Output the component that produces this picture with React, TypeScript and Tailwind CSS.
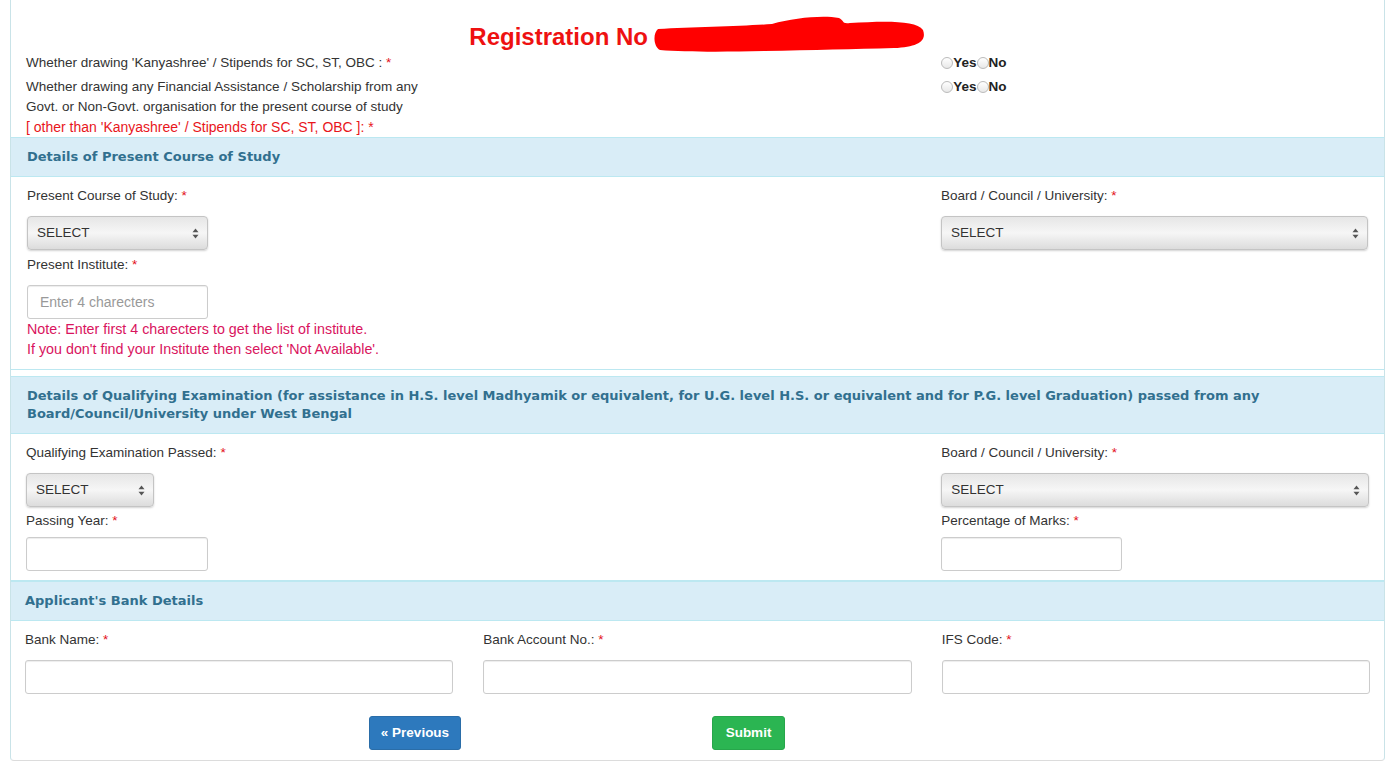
import React from 'react'

const Req = () => <span className="text-[#e3101a]">*</span>

function Label({ text }: { text: string }) {
  return (
    <div className="text-[13.5px] leading-[20px] text-[#333] whitespace-nowrap">
      {text} <Req />
    </div>
  )
}

function SelectBox({ width }: { width: string }) {
  return (
    <div
      className={`${width} h-[34px] flex items-center justify-between pl-[9px] pr-[8px] rounded-[4px] border border-[#c4c4c4] bg-gradient-to-b from-[#e6e6e6] via-[#f6f6f6] to-[#dcdcdc] shadow-[0_1px_2px_rgba(0,0,0,0.18)] text-[13.5px] text-[#333]`}
    >
      <span>SELECT</span>
      <svg width="7" height="11" viewBox="0 0 7 11">
        <path d="M3.5 0.5 L6.5 4.3 L0.5 4.3 Z" fill="#555" />
        <path d="M3.5 10.5 L6.5 6.7 L0.5 6.7 Z" fill="#555" />
      </svg>
    </div>
  )
}

function TextBox({ width, placeholder }: { width: string; placeholder?: string }) {
  return (
    <div
      className={`${width} h-[34px] flex items-center px-[12px] rounded-[3px] border border-[#ccc] bg-white shadow-[inset_0_1px_1px_rgba(0,0,0,0.075)] text-[14px] text-[#999]`}
    >
      {placeholder}
    </div>
  )
}

function Radio() {
  return (
    <span className="inline-block w-[12px] h-[12px] rounded-full border border-[#bbb] bg-gradient-to-b from-white to-[#e8e8e8]" />
  )
}

function YesNo() {
  return (
    <div className="flex items-center h-[20px] text-[13.5px] font-bold text-[#222]">
      <Radio />
      <span>Yes</span>
      <Radio />
      <span>No</span>
    </div>
  )
}

const headCls =
  "bg-[#d9edf7] border-b border-[#bce8f1] py-[10px] text-[13px] leading-[18px] font-bold text-[#31708f] font-['DejaVu_Sans',Verdana,sans-serif]"

export default function App() {
  return (
    <div className="min-h-screen bg-white font-['Liberation_Sans',Arial,sans-serif] text-[#333]">
      <div className="ml-[10px] w-[1375px] border-x border-b border-x-[#c9e3e8] border-b-[#dcdcdc] rounded-b-[4px]">
        {/* Registration + yes/no questions */}
        <div className="pt-[23px]">
          <div className="flex justify-center h-[28px]">
            <span className="text-[24px] leading-[28px] font-bold text-[#ee1111] whitespace-pre">Registration No :</span>
            <svg className="-ml-[9px] -mt-[7px]" width="272" height="36" viewBox="0 0 272 36">
              <path
                d="M4,13 C40,11 90,10 118,8 C140,2 168,-1 185,2 C191,5 187,8 196,7 C230,5 262,4 269,14 C273,25 264,31 240,32 C200,33 160,34 110,35 C70,36 30,36 6,34 C-1,30 -1,17 4,13 Z"
                fill="#ff0000"
              />
            </svg>
          </div>

          <div className="mt-[2px] px-[15px] grid grid-cols-3 gap-x-[30px]">
            <div className="col-span-2">
              <Label text="Whether drawing 'Kanyashree' / Stipends for SC, ST, OBC :" />
            </div>
            <YesNo />
          </div>

          <div className="mt-[4px] px-[15px] grid grid-cols-3 gap-x-[30px]">
            <div className="col-span-2 text-[13.5px] leading-[20px] text-[#333]">
              <div>Whether drawing any Financial Assistance / Scholarship from any</div>
              <div>Govt. or Non-Govt. organisation for the present course of study</div>
              <div className="h-[20px] text-[14px] leading-[20px] text-[#e8161b]">
                [ other than 'Kanyashree' / Stipends for SC, ST, OBC ]: *
              </div>
            </div>
            <YesNo />
          </div>
        </div>

        {/* Present course */}
        <section className="border-y border-[#bce8f1]">
          <div className={`${headCls} px-[16px]`}>Details of Present Course of Study</div>
          <div className="px-[16px] pt-[9px] pb-[10px] grid grid-cols-3 gap-x-[30px] items-start">
            <div>
              <Label text="Present Course of Study:" />
              <div className="mt-[10px]">
                <SelectBox width="w-[181px]" />
              </div>
              <div className="mt-[5px]">
                <Label text="Present Institute:" />
              </div>
              <div className="mt-[10px]">
                <TextBox width="w-[181px]" placeholder="Enter 4 charecters" />
              </div>
              <div className="text-[14.3px] leading-[20px] text-[#d9145e] whitespace-nowrap">
                <div className="h-[20px]">Note: Enter first 4 charecters to get the list of institute.</div>
                <div className="h-[20px]">If you don't find your Institute then select 'Not Available'.</div>
              </div>
            </div>
            <div />
            <div>
              <Label text="Board / Council / University:" />
              <div className="mt-[10px]">
                <SelectBox width="w-full" />
              </div>
            </div>
          </div>
        </section>

        {/* Qualifying examination */}
        <section className="mt-[6px] border-y border-[#bce8f1]">
          <div className={`${headCls} px-[16px]`}>
            Details of Qualifying Examination (for assistance in H.S. level Madhyamik or equivalent, for U.G. level H.S. or equivalent and for P.G. level Graduation) passed from any
            <br />
            Board/Council/University under West Bengal
          </div>
          <div className="px-[15px] pt-[9px] pb-[9px] grid grid-cols-3 gap-x-[30px] items-start">
            <div>
              <Label text="Qualifying Examination Passed:" />
              <div className="mt-[10px]">
                <SelectBox width="w-[128px]" />
              </div>
              <div className="mt-[4px]">
                <Label text="Passing Year:" />
              </div>
              <div className="mt-[6px]">
                <TextBox width="w-[182px]" />
              </div>
            </div>
            <div />
            <div>
              <Label text="Board / Council / University:" />
              <div className="mt-[10px]">
                <SelectBox width="w-full" />
              </div>
              <div className="mt-[4px]">
                <Label text="Percentage of Marks:" />
              </div>
              <div className="mt-[6px]">
                <TextBox width="w-[181px]" />
              </div>
            </div>
          </div>
        </section>

        {/* Bank details */}
        <section className="border-t border-[#bce8f1]">
          <div className={`${headCls} px-[14px]`}>Applicant's Bank Details</div>
          <div className="px-[14px] pt-[9px] pb-[10px]">
            <div className="grid grid-cols-3 gap-x-[30px]">
              <div>
                <Label text="Bank Name:" />
                <div className="mt-[10px]">
                  <TextBox width="w-full" />
                </div>
              </div>
              <div>
                <Label text="Bank Account No.:" />
                <div className="mt-[10px]">
                  <TextBox width="w-full" />
                </div>
              </div>
              <div>
                <Label text="IFS Code:" />
                <div className="mt-[10px]">
                  <TextBox width="w-full" />
                </div>
              </div>
            </div>
            <div className="mt-[22px] flex">
              <button className="ml-[344px] w-[92px] h-[34px] rounded-[3px] bg-[#2d79bd] border border-[#2a6da8] text-white text-[13.5px] font-bold">
                « Previous
              </button>
              <button className="ml-[251px] w-[73px] h-[34px] rounded-[3px] bg-[#2bb552] border border-[#27a64b] text-white text-[13.5px] font-bold">
                Submit
              </button>
            </div>
          </div>
        </section>
      </div>
    </div>
  )
}
